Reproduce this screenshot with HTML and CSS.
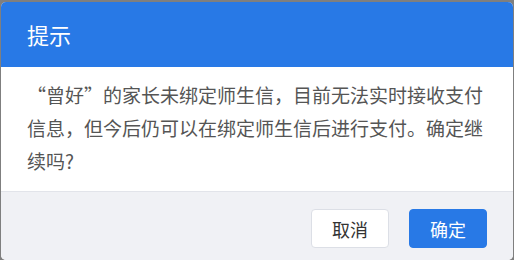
FILE: index.html
```html
<!DOCTYPE html>
<html lang="zh-CN">
<head>
    <meta charset="UTF-8">
    <title>提示</title>
    <link rel="stylesheet" href="styles.css">
</head>
<body>
    <div class="dialog">
        <div class="dialog-header">提示</div>
        <div class="dialog-body">“曾好”的家长未绑定师生信，目前无法实时接收支付信息，但今后仍可以在绑定师生信后进行支付。确定继续吗?</div>
        <div class="dialog-footer">
            <button class="btn btn-cancel">取消</button>
            <button class="btn btn-ok">确定</button>
        </div>
    </div>
</body>
</html>
```

FILE: styles.css
```css
body {
    margin: 0;
    background: #7f7f7f;
    font-family: "Noto Sans CJK SC", "Noto Sans", sans-serif;
}
.dialog {
    margin: 2px 1px 0 1px;
    height: 258px;
    background: #fff;
    border-radius: 5px;
    overflow: hidden;
    display: flex;
    flex-direction: column;
}
.dialog-header {
    height: 65px;
    background: #2879e6;
    color: #fff;
    font-size: 22px;
    line-height: 65px;
    padding-left: 26px;
}
.dialog-body {
    padding: 11px 26px 14px 26px;
    font-size: 19px;
    line-height: 33px;
    color: #555;
}
.dialog-footer {
    flex: 1;
    background: #f0f1f5;
    border-top: 1px solid #e2e4ea;
    display: flex;
    justify-content: flex-end;
    align-items: flex-start;
    gap: 20px;
    padding: 17px 26px 0 0;
}
.btn {
    width: 78px;
    height: 39px;
    border-radius: 4px;
    font-family: inherit;
    font-size: 18px;
    cursor: pointer;
    padding: 0;
}
.btn-cancel {
    background: #fff;
    border: 1px solid #dcdfe6;
    color: #333;
}
.btn-ok {
    background: #2879e6;
    border: 1px solid #2879e6;
    color: #fff;
}
```
